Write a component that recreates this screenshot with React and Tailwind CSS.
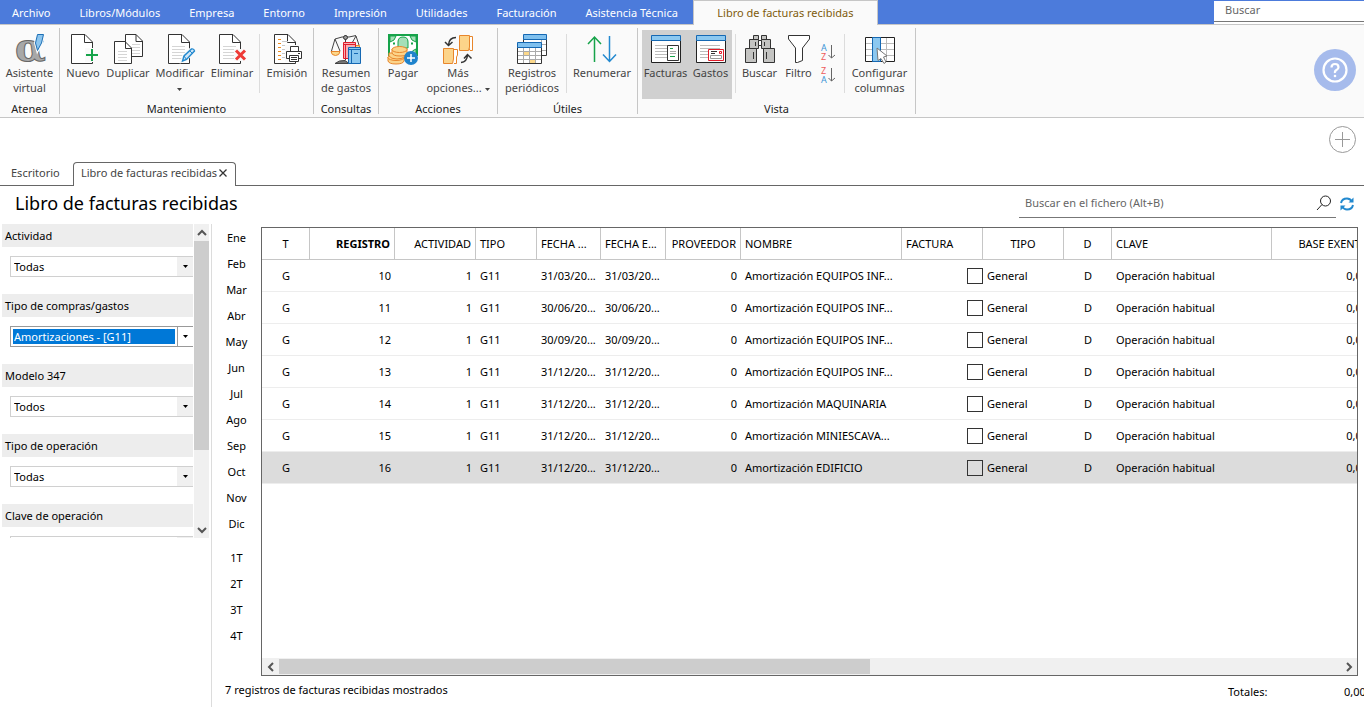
// App.jsx
import { useState } from "react";

const menus = [
  "Archivo",
  "Libros/Módulos",
  "Empresa",
  "Entorno",
  "Impresión",
  "Utilidades",
  "Facturación",
  "Asistencia Técnica",
];

const filters = [
  { id: "actividad", label: "Actividad", value: "Todas" },
  { id: "tipo-compras", label: "Tipo de compras/gastos", value: "Amortizaciones - [G11]", focused: true },
  { id: "modelo", label: "Modelo 347", value: "Todos" },
  { id: "tipo-operacion", label: "Tipo de operación", value: "Todas" },
  { id: "clave-operacion", label: "Clave de operación", value: "Todas" },
];

const months = ["Ene", "Feb", "Mar", "Abr", "May", "Jun", "Jul", "Ago", "Sep", "Oct", "Nov", "Dic"];
const quarters = ["1T", "2T", "3T", "4T"];

const columns = [
  { label: "T", className: "w-12 text-center" },
  { label: "REGISTRO", className: "w-[85px] text-right font-bold" },
  { label: "ACTIVIDAD", className: "w-[81px] text-right" },
  { label: "TIPO", className: "w-[61px] text-left" },
  { label: "FECHA ...", className: "w-16 text-left" },
  { label: "FECHA E...", className: "w-[65px] text-left" },
  { label: "PROVEEDOR", className: "w-[75px] text-right" },
  { label: "NOMBRE", className: "w-[161px] text-left" },
  { label: "FACTURA", className: "w-[81px] text-left" },
  { label: "TIPO", className: "w-[81px] text-center" },
  { label: "D", className: "w-12 text-center" },
  { label: "CLAVE", className: "w-40 text-left" },
  { label: "BASE EXENTA", className: "text-right" },
];

const rows = [
  { id: 10, date: "31/03/20...", name: "Amortización EQUIPOS INF..." },
  { id: 11, date: "30/06/20...", name: "Amortización EQUIPOS INF..." },
  { id: 12, date: "30/09/20...", name: "Amortización EQUIPOS INF..." },
  { id: 13, date: "31/12/20...", name: "Amortización EQUIPOS INF..." },
  { id: 14, date: "31/12/20...", name: "Amortización MAQUINARIA" },
  { id: 15, date: "31/12/20...", name: "Amortización MINIESCAVA..." },
  { id: 16, date: "31/12/20...", name: "Amortización EDIFICIO" },
];

/* ---------- Icons ---------- */

const Icon = ({ children }) => (
  <svg viewBox="0 0 32 32" fill="none" className="h-8 w-8 shrink-0 overflow-visible" aria-hidden="true">
    {children}
  </svg>
);

const Sheet = ({ x = 4 }) => (
  <g transform={`translate(${x} 0)`}>
    <path d="M.5 .5H14L21.5 8V29.5H.5Z" fill="#fff" stroke="#333" />
    <path d="M13.5 .5V8.5H21.5" stroke="#333" />
  </g>
);

const Lines = ({ x, y, w, n, gap = 3, color = "#d5d5d5" }) => (
  <path
    d={Array.from({ length: n }, (_, i) => `M${x} ${y + i * gap}h${w}`).join("")}
    stroke={color}
  />
);

const AteneaIcon = () => (
  <Icon>
    <text
      x="1"
      y="27"
      fontSize="40"
      fontFamily="DejaVu Serif, serif"
      fontWeight="bold"
      fill="#a8a8a8"
      stroke="#666"
      strokeWidth="1"
    >
      α
    </text>
    <path d="M23.500 .5H29.500L27.500 9 23.500 16.500 21.500 9Z" fill="#8cc5ee" stroke="#fafafa" strokeWidth="3" />
    <path d="M23.500 .5H29.500L27.500 9 23.500 16.500 21.500 9Z" fill="#8cc5ee" stroke="#1c6fb5" />
  </Icon>
);

const NewIcon = () => (
  <Icon>
    <Sheet />
    <path d="M18 14h14v14H18z" fill="#fafafa" />
    <path d="M25 15V27M19 21H31" stroke="#16a34a" strokeWidth="2" />
  </Icon>
);

const DuplicateIcon = () => (
  <Icon>
    <path d="M13.500 .5H24L30.500 7V22.500H13.500Z" fill="#fff" stroke="#333" />
    <path d="M24 .5V7.500H30.500" stroke="#333" />
    <Lines x={20} y={10.5} w={8} n={4} />
    <path d="M2.500 7.500H13L19.500 14V29.500H2.500Z" fill="#fff" stroke="#333" />
    <path d="M13.500 7.500V14.500H19.500" stroke="#333" />
    <Lines x={6} y={17.5} w={9} n={4} />
  </Icon>
);

const EditIcon = () => (
  <Icon>
    <Sheet />
    <Lines x={8} y={12.5} w={13} n={5} />
    <path d="M18 27L19.500 22 27.500 14.500Q30 14 30.500 17L22.500 25Z" fill="#fff" stroke="#fafafa" strokeWidth="3" />
    <path d="M18.500 27L20 22 27.500 15Q30 14.500 30.500 17L22.500 25.500Z" fill="#cfe6f7" stroke="#2389cf" strokeWidth="1.400" />
    <path d="M20 22L22.500 25.500M26 17l2.500 2.500" stroke="#2389cf" />
  </Icon>
);

const DeleteIcon = () => (
  <Icon>
    <Sheet x={3} />
    <Lines x={7} y={12.5} w={13} n={5} />
    <path d="M18 15h13v12H18z" fill="#fafafa" />
    <path d="M20 16.500L29 25.500M29 16.500L20 25.500" stroke="#ee3a36" strokeWidth="3" />
  </Icon>
);

const PrintIcon = () => (
  <Icon>
    <Sheet x={3} />
    <Lines x={7} y={5.5} w={3} n={6} gap={4} color="#f08c1c" />
    <Lines x={11} y={7.5} w={6} n={5} gap={4} color="#c8c8c8" />
    <path d="M14 11h18v17H14z" fill="#fafafa" />
    <path d="M19.500 17V12.500H27.500V17M18.500 24.500H15.500V17.500H30.500V24.500H28" fill="#fff" stroke="#333" />
    <path d="M18.500 21.500H27.500V27.500H18.500Z" fill="#fff" stroke="#333" />
    <path d="M20 23.500h6M20 25.500h6M27 19.500h2" stroke="#333" />
  </Icon>
);

const SummaryIcon = () => (
  <Icon>
    <path d="M5 29.500Q9 26 15 26.500L19 29.500Z" fill="#777" stroke="#444" />
    <path d="M15.500 1V26M5 5L12 3H19L26 1.500M5 5L1.500 17M5 5L10 17M26 2L22 9M26 2L29 11" stroke="#444" />
    <circle cx="15.500" cy="3.500" r="2" fill="#999" stroke="#333" />
    <path d="M1 17.500H10Q9.500 21.500 5.500 21.500T1 17.500Z" fill="#fcd88a" stroke="#e8862c" />
    <path d="M24 11.500H29.500V15" fill="#fcd88a" stroke="#e8862c" />
    <path d="M13.500 8.500H25.500V24.500H13.500Z" fill="#f8aeb2" stroke="#e11d2a" />
    <path d="M13.500 10.500H25.500M15.500 11V24" stroke="#e11d2a" />
    <path d="M19 14.500h4" stroke="#e11d2a" />
    <path d="M18.500 13.500H30.500V29.500H18.500Z" fill="#8cc8f0" stroke="#1568b3" />
    <path d="M18.500 15.500H30.500M21.500 16V29M24 19.500h4" stroke="#1568b3" />
  </Icon>
);

const PayIcon = () => (
  <Icon>
    <path d="M2 1H30V21H2Z" fill="#fff" stroke="#16a34a" strokeWidth="2" />
    <path d="M3 2H9Q8 7 3 8ZM29 2H23Q24 7 29 8ZM29 20H24Q25 16 29 15Z" fill="#a5dfb8" stroke="#16a34a" />
    <path d="M11 14V8Q11 3 16 3T21 8V14Z" fill="#a5dfb8" stroke="#16a34a" />
    <path d="M6 9.500h2M24 9.500h2" stroke="#16a34a" strokeWidth="2" />
    <g fill="#fcd48a" stroke="#e8862c">
      <path d="M1 23V27Q2 30 9 30T17 27V23Z" />
      <ellipse cx="9" cy="23.500" rx="8" ry="3" />
      <path d="M2 19V22Q4 25 10 25T18 22V19Z" />
      <path d="M5 15V19Q6 22 13 22T20 19V15Z" />
      <ellipse cx="12.500" cy="15.500" rx="7.500" ry="3" />
    </g>
    <circle cx="24" cy="24" r="7" fill="#1f83cc" />
    <path d="M24 20V28M20 24H28" stroke="#fff" strokeWidth="1.500" />
  </Icon>
);

const MoreIcon = () => (
  <Icon>
    <g stroke="#e8862c" fill="#fcd48a">
      <path d="M27 2.500H30.500V16.500H28L26 12" fill="#fff" />
      <path d="M17.500 1.500H27.500V13L26.500 16.500H17.500Z" />
      <path d="M11 15.500H15.500V21L14.500 23V29.500H12" fill="#fff" />
      <path d="M1.500 14.500H11.500V25L10.500 29.500H1.500Z" />
    </g>
    <path d="M14 3.500Q7 3.500 6.500 11M3 8L6.500 11.500 10.500 8M19 28.500Q25 28 25.500 21M22 24.500L25.500 20.500 29.500 24.500" stroke="#333" strokeWidth="1.500" />
  </Icon>
);

const PeriodicIcon = () => (
  <Icon>
    <path d="M7.500 5.500H30.500V21.500H7.500Z" fill="#fff" stroke="#333" />
    <path d="M25.500 6V21M8 10.500H30M8 16.500H30" stroke="#aaa" />
    <path d="M7.500 .5H30.500V5.500H7.500Z" fill="#7fc0ee" stroke="#1568b3" />
    <path d="M1.500 13.500H25.500V29.500H1.500Z" fill="#fff" stroke="#333" />
    <path d="M7 18h6v4H7zM14 26h5v3h-5z" fill="#fcd88a" />
    <path d="M7.500 14V29M13.500 14V29M19.500 14V29M2 17.500H25M2 21.500H25M2 25.500H25" stroke="#aaa" />
    <path d="M1.500 8.500H25.500V13.500H1.500Z" fill="#7fc0ee" stroke="#1568b3" />
  </Icon>
);

const RenumberIcon = () => (
  <Icon>
    <path d="M8.500 28V3M2 10L8.500 3 15 10" stroke="#16a34a" strokeWidth="1.500" />
    <path d="M23.500 2V27M17 20.500L23.500 27.500 30 20.500" stroke="#2389cf" strokeWidth="1.500" />
  </Icon>
);

const WindowBase = () => (
  <>
    <path d="M1.500 6.500H30.500V28.500H1.500Z" fill="#fff" stroke="#222" />
    <path d="M1.500 1.500H30.500V6.500H1.500Z" fill="#8cc8f0" stroke="#1568b3" />
    <Lines x={5} y={11.5} w={20} n={5} color="#bbb" />
  </>
);

const InvoicesIcon = () => (
  <Icon>
    <WindowBase />
    <path d="M17.500 11.500H28.500V26.500H17.500Z" fill="#fff" stroke="#333" />
    <path d="M20 14.500h3M20 22.500h5" stroke="#16a34a" />
    <Lines x={20} y={17.5} w={6} n={2} gap={2} color="#aaa" />
  </Icon>
);

const ExpensesIcon = () => (
  <Icon>
    <WindowBase />
    <path d="M13.500 15.500H28.500V26.500H13.500Z" fill="#fff" stroke="#e11d2a" />
    <path d="M16 17.500h6M16 19.500h4" stroke="#333" />
    <path d="M24.500 17.500h2v2h-2z" stroke="#e11d2a" />
    <path d="M15.500 21.500H26.500V24.500H15.500Z" stroke="#999" />
  </Icon>
);

const BinocularsIcon = () => (
  <Icon>
    <g fill="#c4c4c2" stroke="#333">
      <path d="M9.500 1.500H14.500V5.500H9.500ZM17.500 1.500H22.500V5.500H17.500Z" />
      <path d="M5.500 5.500H14.500V14.500H5.500ZM17.500 5.500H26.500V14.500H17.500Z" />
      <path d="M14.500 6.500H17.500V11.500H14.500Z" fill="#fff" />
      <path d="M1.500 14.500H12.500V28.500H1.500ZM19.500 14.500H30.500V28.500H19.500Z" />
      <path d="M9.500 18V25M22.500 18V25M11.500 8V12M20.500 8V12" />
    </g>
  </Icon>
);

const FunnelIcon = () => (
  <Icon>
    <path d="M5.500 1.500H26.500V5L19.500 14V26.500L14.500 28.500H12.500V14L5.500 5Z" fill="#fff" stroke="#333" />
  </Icon>
);

const ColumnsIcon = () => (
  <Icon>
    <path d="M1.500 3.500H30.500V27.500H1.500Z" fill="#fff" stroke="#222" />
    <path d="M22.500 4V27M2 9.500H30M2 15.500H30M2 21.500H30" stroke="#bbb" />
    <path d="M8.500 3.500H16.500V27.500H8.500Z" fill="#8cc8f0" stroke="#1568b3" />
    <path d="M13 14L23 22 19.500 23 22 28 20 29.500 17 24.500 14 26.500Z" fill="#fff" stroke="#777" />
  </Icon>
);

const SortButton = ({ top, bottom, label }) => (
  <button type="button" aria-label={label} className="flex h-5 w-4 items-center">
    <svg viewBox="0 0 16 20" fill="none" className="h-5 w-4 overflow-visible" aria-hidden="true">
      <text y="9" fontSize="9" fontFamily="Noto Sans, sans-serif">
        <tspan x="0" fill={top === "A" ? "#3a94d6" : "#ee5a5a"}>
          {top}
        </tspan>
        <tspan x="0" dy="9" fill={bottom === "A" ? "#3a94d6" : "#ee5a5a"}>
          {bottom}
        </tspan>
      </text>
      <path d="M10.500 3V16M7.500 13L10.500 16 14 13" stroke="#666" />
    </svg>
  </button>
);

const Caret = () => (
  <svg viewBox="0 0 5 3" className="inline h-[3px] w-[5px]" aria-hidden="true">
    <path d="M0 0H5L2.500 3Z" fill="currentColor" />
  </svg>
);

const Chevron = ({ d }) => (
  <svg viewBox="0 0 10 10" fill="none" className="h-[10px] w-[10px]" aria-hidden="true">
    <path d={d} stroke="#555" strokeWidth="2" />
  </svg>
);

/* ---------- Ribbon ---------- */

const RibbonButton = ({ icon, label, second, width, caret, active }) => (
  <button
    type="button"
    className={`flex h-[69px] shrink-0 flex-col items-center pt-1 whitespace-nowrap text-[#444] ${width} ${
      active ? "bg-[#d0d0d0]" : ""
    }`}
  >
    {icon}
    <span className="-mt-px flex flex-col items-center">
      <span>{label}</span>
      {(second || caret) && (
        <span>
          {second} {caret && <Caret />}
        </span>
      )}
    </span>
  </button>
);

const RibbonGroup = ({ label, width, children }) => (
  <section className={`my-[3px] flex shrink-0 flex-col border-r border-[#c6c6c6] pt-0.5 ${width}`}>
    <div className="flex justify-center">{children}</div>
    <h2 className="mt-0.5 text-center text-[#222]">{label}</h2>
  </section>
);

const Divider = () => <div className="mx-[3px] mt-1 h-[59px] w-px shrink-0 bg-[#dcdcdc]" />;

const Ribbon = () => (
  <div className="flex h-[93px] shrink-0 items-stretch border-b border-[#c6c6c6] bg-[#fafafa]">
    <RibbonGroup label="Atenea" width="w-[60px]">
      <RibbonButton icon={<AteneaIcon />} label="Asistente" second="virtual" width="w-14" />
    </RibbonGroup>
    <RibbonGroup label="Mantenimiento" width="w-[254px]">
      <RibbonButton icon={<NewIcon />} label="Nuevo" width="w-[42px]" />
      <RibbonButton icon={<DuplicateIcon />} label="Duplicar" width="w-12" />
      <RibbonButton icon={<EditIcon />} label="Modificar" caret width="w-14" />
      <RibbonButton icon={<DeleteIcon />} label="Eliminar" width="w-12" />
      <Divider />
      <RibbonButton icon={<PrintIcon />} label="Emisión" width="w-12" />
    </RibbonGroup>
    <RibbonGroup label="Consultas" width="w-[65px]">
      <RibbonButton icon={<SummaryIcon />} label="Resumen" second="de gastos" width="w-14" />
    </RibbonGroup>
    <RibbonGroup label="Acciones" width="w-[119px]">
      <RibbonButton icon={<PayIcon />} label="Pagar" width="w-10" />
      <RibbonButton icon={<MoreIcon />} label="Más" second="opciones..." caret width="w-[70px]" />
    </RibbonGroup>
    <RibbonGroup label="Útiles" width="w-[140px]">
      <RibbonButton icon={<PeriodicIcon />} label="Registros" second="periódicos" width="w-[62px]" />
      <Divider />
      <RibbonButton icon={<RenumberIcon />} label="Renumerar" width="w-16" />
    </RibbonGroup>
    <RibbonGroup label="Vista" width="w-[278px]">
      <RibbonButton icon={<InvoicesIcon />} label="Facturas" active width="w-12" />
      <RibbonButton icon={<ExpensesIcon />} label="Gastos" active width="w-[42px]" />
      <Divider />
      <RibbonButton icon={<BinocularsIcon />} label="Buscar" width="w-[42px]" />
      <RibbonButton icon={<FunnelIcon />} label="Filtro" width="w-9" />
      <div className="flex w-6 flex-col items-center gap-[3px] pt-3">
        <SortButton top="A" bottom="Z" label="Orden ascendente" />
        <SortButton top="Z" bottom="A" label="Orden descendente" />
      </div>
      <Divider />
      <RibbonButton icon={<ColumnsIcon />} label="Configurar" second="columnas" width="w-16" />
    </RibbonGroup>
    <div className="flex flex-1 items-center justify-end pr-2 pb-0.5">
      <button
        type="button"
        aria-label="Ayuda"
        className="flex h-[42px] w-[42px] items-center justify-center rounded-full bg-[#a6bbec]"
      >
        <svg viewBox="0 0 26 26" fill="none" className="h-[26px] w-[26px]" aria-hidden="true">
          <circle cx="13" cy="13" r="11.500" stroke="#fff" strokeWidth="2.200" />
          <path d="M9.500 10.500Q9.500 7 13 7T16.500 10.200Q16.500 12 14.500 13T13 16" stroke="#fff" strokeWidth="2.200" />
          <circle cx="13" cy="19" r="1.300" fill="#fff" />
        </svg>
      </button>
    </div>
  </div>
);

const MenuBar = () => (
  <header className="flex h-[25px] shrink-0 border-b border-[#c6c6c6] bg-[#4c7bdb]">
    <nav className="flex shrink-0">
      {menus.map((menu) => (
        <a key={menu} href="#" className="pr-[15px] pl-[14px] leading-[26px] whitespace-nowrap text-white first:pl-3">
          {menu}
        </a>
      ))}
    </nav>
    <a
      href="#"
      className="-mb-px w-[185px] shrink-0 border-x border-t border-[#c6c6c6] bg-[#fafafa] text-center leading-6 whitespace-nowrap text-[#7f5a0c]"
    >
      Libro de facturas recibidas
    </a>
    <div className="flex flex-1 justify-end pt-px">
      <div className="w-[150px] bg-white">
        <input
          type="text"
          aria-label="Buscar"
          placeholder="Buscar"
          className="block h-[21px] w-full border-b border-[#777] px-[11px] pb-[3px] outline-none placeholder:text-[#666]"
        />
      </div>
    </div>
  </header>
);

/* ---------- Sidebar ---------- */

const FilterBlock = ({ id, label, value, focused }) => (
  <div className="h-[70px] shrink-0">
    <label htmlFor={id} className="ml-0.5 block h-[23px] bg-[#ededed] pl-[3px] leading-[23px]">
      {label}
    </label>
    <div
      className={`mt-[9px] ml-[10px] flex h-[21px] border-y border-l bg-white ${
        focused ? "border-[#999]" : "border-[#d0d0d0]"
      }`}
    >
      <select
        id={id}
        defaultValue={value}
        className={`min-w-0 flex-1 appearance-none outline-none ${
          focused ? "m-0.5 bg-[#0078d7] px-px text-white" : "px-[3px]"
        }`}
      >
        <option>{value}</option>
      </select>
      <span
        className={`flex w-4 items-center justify-center ${
          focused ? "border-l border-[#999] bg-white" : "bg-[#f0f0f0]"
        }`}
      >
        <Caret />
      </span>
    </div>
  </div>
);

const Sidebar = () => (
  <aside className="w-[212px] shrink-0 border-r border-[#dcdcdc]">
    <div className="flex h-[314px]">
      <div className="flex flex-1 flex-col overflow-hidden">
        {filters.map((filter) => (
          <FilterBlock key={filter.id} {...filter} />
        ))}
      </div>
      <div className="ml-px flex w-[15px] flex-col items-center bg-[#f0f0f0]">
        <div className="flex h-[17px] items-center">
          <Chevron d="M1 7L5 3 9 7" />
        </div>
        <div className="h-[209px] w-full bg-[#cdcdcd]" />
        <div className="mt-auto flex h-[17px] items-center">
          <Chevron d="M1 3L5 7 9 3" />
        </div>
      </div>
      <div className="w-0.5" />
    </div>
  </aside>
);

const PeriodRail = () => (
  <div className="flex w-[49px] shrink-0 flex-col">
    {months.map((month) => (
      <button key={month} type="button" className="h-[26px] w-full">
        {month}
      </button>
    ))}
    <div className="mt-2 flex flex-col">
      {quarters.map((quarter) => (
        <button key={quarter} type="button" className="h-[26px] w-full">
          {quarter}
        </button>
      ))}
    </div>
  </div>
);

/* ---------- Grid ---------- */

const InvoiceTable = ({ selected, onSelect }) => (
  <div className="mt-[3px] flex min-w-0 flex-1 flex-col border border-[#666]">
    <div className="flex-1 overflow-hidden">
      <table className="w-full min-w-[1110px] table-fixed border-separate border-spacing-0 whitespace-nowrap">
        <thead>
          <tr className="h-8">
            {columns.map(({ label, className }, i) => (
              <th
                key={i}
                className={`border-r border-b border-[#c6c6c6] px-1 ${className} ${
                  className.includes("font-bold") ? "" : "font-normal"
                }`}
              >
                {label}
              </th>
            ))}
          </tr>
        </thead>
        <tbody>
          {rows.map(({ id, date, name }) => (
            <tr
              key={id}
              onClick={() => onSelect(id)}
              className={`h-8 *:border-b *:border-[#ededed] *:px-1 ${selected === id ? "bg-[#dcdcdc]" : ""}`}
            >
              <td className="text-center">G</td>
              <td className="text-right">{id}</td>
              <td className="text-right">1</td>
              <td>G11</td>
              <td>{date}</td>
              <td>{date}</td>
              <td className="text-right">0</td>
              <td>{name}</td>
              <td>
                <input
                  type="checkbox"
                  aria-label={`Factura ${id}`}
                  className="-mr-1 ml-auto block h-4 w-4 appearance-none border border-[#333]"
                />
              </td>
              <td>General</td>
              <td className="text-center">D</td>
              <td>Operación habitual</td>
              <td className="text-right">0,00</td>
            </tr>
          ))}
        </tbody>
      </table>
    </div>
    <div className="flex h-[17px] shrink-0 items-center bg-[#f0f0f0]">
      <span className="flex w-[17px] justify-center">
        <Chevron d="M7 1L3 5 7 9" />
      </span>
      <div className="h-[15px] w-[54%] bg-[#cdcdcd]" />
      <span className="ml-auto flex w-[17px] justify-center">
        <Chevron d="M3 1L7 5 3 9" />
      </span>
    </div>
  </div>
);

const App = () => {
  const [selected, setSelected] = useState(16);

  return (
    <div className="flex h-screen min-h-[640px] flex-col overflow-hidden bg-white font-['Noto_Sans',sans-serif] text-[11px] leading-[15px] text-black">
      <MenuBar />
      <Ribbon />

      <div className="flex shrink-0 justify-end pt-2 pr-2">
        <button type="button" aria-label="Añadir" className="h-[27px] w-[27px]">
          <svg viewBox="0 0 27 27" fill="none" stroke="#999" className="h-[27px] w-[27px]" aria-hidden="true">
            <circle cx="13.500" cy="13.500" r="13" />
            <path d="M13.500 6V21M6 13.500H21" />
          </svg>
        </button>
      </div>

      <div className="mt-[9px] flex shrink-0 items-end text-[#444]">
        <a href="#" className="h-6 w-[73px] border-b border-[#666] pl-[11px] leading-[21px]">
          Escritorio
        </a>
        <div className="flex h-6 w-[163px] items-center gap-0.5 rounded-t border-x border-t border-[#666] pb-1 pl-[7px] whitespace-nowrap">
          <a href="#">Libro de facturas recibidas</a>
          <button type="button" aria-label="Cerrar">
            <svg viewBox="0 0 8 8" className="h-2 w-2" aria-hidden="true">
              <path d="M.5 .5L7.500 7.500M7.500 .5L.5 7.500" stroke="#333" strokeWidth="1.300" />
            </svg>
          </button>
        </div>
        <div className="h-6 flex-1 border-b border-[#666]" />
      </div>

      <div className="flex h-[38px] shrink-0 items-start justify-between pr-[10px] pl-[15px]">
        <h1 className="text-lg leading-[34px]">Libro de facturas recibidas</h1>
        <div className="flex items-center">
          <div className="flex h-8 w-[317px] items-center border-b border-[#777] pt-0.5 pr-1 pl-1.5">
            <input
              type="text"
              aria-label="Buscar en el fichero"
              placeholder="Buscar en el fichero (Alt+B)"
              className="min-w-0 flex-1 outline-none placeholder:text-[#666]"
            />
            <button type="button" aria-label="Buscar">
              <svg viewBox="0 0 16 16" fill="none" stroke="#222" className="h-4 w-4" aria-hidden="true">
                <circle cx="9.500" cy="6" r="5" />
                <path d="M6 9.500L1 15" />
              </svg>
            </button>
          </div>
          <button type="button" aria-label="Actualizar" className="ml-1 pt-1">
            <svg viewBox="0 0 14 14" fill="none" stroke="#2389cf" className="h-[14px] w-[14px]" aria-hidden="true">
              <path d="M1 6Q2 1.500 7 1.500 10 1.500 12 4.500M13 8Q12 12.500 7 12.500 4 12.500 2 9.500" strokeWidth="2" />
              <path d="M13.500 .5V5.500H8.500ZM.5 13.500V8.500H5.500Z" fill="#2389cf" stroke="none" />
            </svg>
          </button>
        </div>
      </div>

      <div className="flex min-h-0 flex-1">
        <Sidebar />
        <main className="flex min-w-0 flex-1 flex-col">
          <div className="flex min-h-0 flex-1 pr-1.5">
            <PeriodRail />
            <InvoiceTable selected={selected} onSelect={setSelected} />
          </div>
          <footer className="flex h-[31px] shrink-0 items-center justify-between overflow-hidden pl-[13px]">
            <span className="pb-1">7 registros de facturas recibidas mostrados</span>
            <div className="flex w-[136px] shrink-0 justify-between whitespace-nowrap">
              <span>Totales:</span>
              <span className="w-5">0,00</span>
            </div>
          </footer>
        </main>
      </div>
    </div>
  );
};

export default App;
